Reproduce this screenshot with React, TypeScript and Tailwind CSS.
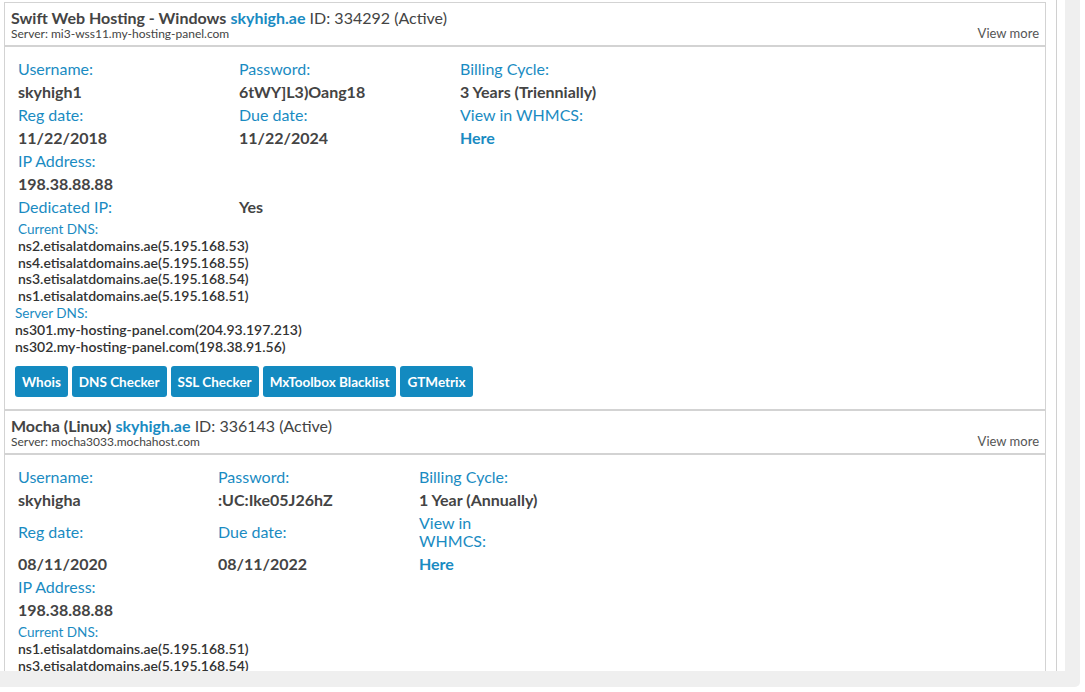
import React from 'react'

const font = { fontFamily: 'Lato, "Open Sans", sans-serif' }

type Service = {
  product: string
  domain: string
  id: string
  server: string
  username: string
  password: string
  cycle: string
  regDate: string
  dueDate: string
  ip: string
  dedicated?: string
  currentDns: string[]
  serverDns: string[]
  cols: string
  wrapWhmcs?: boolean
}

const services: Service[] = [
  {
    product: 'Swift Web Hosting - Windows',
    domain: 'skyhigh.ae',
    id: '334292',
    server: 'mi3-wss11.my-hosting-panel.com',
    username: 'skyhigh1',
    password: '6tWY]L3)Oang18',
    cycle: '3 Years (Triennially)',
    regDate: '11/22/2018',
    dueDate: '11/22/2024',
    ip: '198.38.88.88',
    dedicated: 'Yes',
    currentDns: [
      'ns2.etisalatdomains.ae(5.195.168.53)',
      'ns4.etisalatdomains.ae(5.195.168.55)',
      'ns3.etisalatdomains.ae(5.195.168.54)',
      'ns1.etisalatdomains.ae(5.195.168.51)',
    ],
    serverDns: ['ns301.my-hosting-panel.com(204.93.197.213)', 'ns302.my-hosting-panel.com(198.38.91.56)'],
    cols: 'grid-cols-[221px_221px_1fr]',
  },
  {
    product: 'Mocha (Linux)',
    domain: 'skyhigh.ae',
    id: '336143',
    server: 'mocha3033.mochahost.com',
    username: 'skyhigha',
    password: ':UC:Ike05J26hZ',
    cycle: '1 Year (Annually)',
    regDate: '08/11/2020',
    dueDate: '08/11/2022',
    ip: '198.38.88.88',
    currentDns: [
      'ns1.etisalatdomains.ae(5.195.168.51)',
      'ns3.etisalatdomains.ae(5.195.168.54)',
      'ns2.etisalatdomains.ae(5.195.168.53)',
      'ns4.etisalatdomains.ae(5.195.168.55)',
    ],
    serverDns: ['ns1.mochahost.com(198.38.82.2)', 'ns2.mochahost.com(162.213.250.34)'],
    cols: 'grid-cols-[200px_201px_1fr]',
    wrapWhmcs: true,
  },
]

const tools = ['Whois', 'DNS Checker', 'SSL Checker', 'MxToolbox Blacklist', 'GTMetrix']

function Label({ children }: { children: React.ReactNode }) {
  return <div className="py-[2.5px] text-[16px] leading-[18px] text-[#1a8bc2]">{children}</div>
}

function Value({ children, link }: { children?: React.ReactNode; link?: boolean }) {
  return (
    <div className={`py-[2.5px] text-[16px] font-bold leading-[18px] whitespace-nowrap ${link ? 'text-[#1a8bc2]' : 'text-[#444]'}`}>
      {children}
    </div>
  )
}

function ServiceCard({ s }: { s: Service }) {
  return (
    <div>
      <div className="flex items-end justify-between border border-b-2 border-[#d3d3d3] px-[6px] pb-[5px] pt-[5px] text-[#444]">
        <div>
          <div className="text-[16px] leading-[19px]">
            <span className="font-bold">{s.product}</span>{' '}
            <span className="font-bold text-[#1a8bc2]">{s.domain}</span> ID: {s.id} (Active)
          </div>
          <div className="text-[12px] leading-[13px]">Server: {s.server}</div>
        </div>
        <div className="text-[13px] leading-[14px] text-[#555]">View more</div>
      </div>
      <div className="border-x border-b border-[#d3d3d3] px-[10px] pb-[12px] pt-[10px]">
        <div className="pl-[3px]">
          <div className={`grid items-center ${s.cols}`}>
            <Label>Username:</Label>
            <Label>Password:</Label>
            <Label>Billing Cycle:</Label>
            <Value>{s.username}</Value>
            <Value>{s.password}</Value>
            <Value>{s.cycle}</Value>
            <Label>Reg date:</Label>
            <Label>Due date:</Label>
            <Label>
              {s.wrapWhmcs ? (
                <>
                  View in
                  <br />
                  WHMCS:
                </>
              ) : (
                'View in WHMCS:'
              )}
            </Label>
            <Value>{s.regDate}</Value>
            <Value>{s.dueDate}</Value>
            <Value link>Here</Value>
            <Label>IP Address:</Label>
            <div />
            <div />
            <Value>{s.ip}</Value>
            <div />
            <div />
            {s.dedicated && (
              <>
                <Label>Dedicated IP:</Label>
                <Value>{s.dedicated}</Value>
                <div />
              </>
            )}
          </div>
          <div className="pt-[3px] leading-[16.8px]">
            <div className="text-[13.5px] text-[#1a8bc2]">Current DNS:</div>
            {s.currentDns.map((d) => (
              <div key={d} className="text-[14px] font-semibold text-[#333]">
                {d}
              </div>
            ))}
          </div>
        </div>
        <div className="leading-[16.8px]">
          <div className="text-[13.5px] text-[#1a8bc2]">Server DNS:</div>
          {s.serverDns.map((d) => (
            <div key={d} className="text-[14px] font-semibold text-[#333]">
              {d}
            </div>
          ))}
        </div>
        <div className="mt-[11px] flex gap-[4px]">
          {tools.map((t) => (
            <button
              key={t}
              className="h-[31px] rounded-[3px] bg-[#138ac0] px-[7px] text-[13.5px] font-bold text-white"
            >
              {t}
            </button>
          ))}
        </div>
      </div>
    </div>
  )
}

export default function App() {
  return (
    <div className="h-[692px] w-[1085px] overflow-hidden bg-white" style={font}>
      <div className="h-[687px] w-[1080px] rounded-br-[5px] bg-[#efefef] pb-[16px] pr-[15px]">
        <div className="flex h-full overflow-hidden bg-white">
          <div className="w-[1057px] shrink-0 border-r border-[#d0d0d0] pl-[4px] pr-[10px] pt-[2px]">
            {services.map((s) => (
              <ServiceCard key={s.id} s={s} />
            ))}
          </div>
        </div>
      </div>
    </div>
  )
}
